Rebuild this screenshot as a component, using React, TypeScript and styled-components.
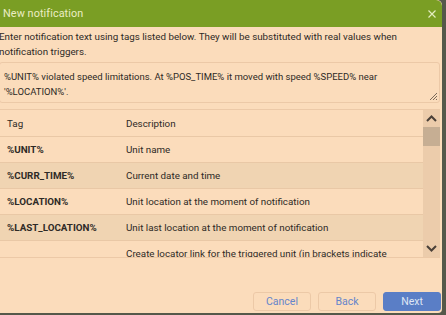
import React from "react";
import styled, { createGlobalStyle } from "styled-components";

const Global = createGlobalStyle`
  html, body { margin: 0; padding: 0; }
  body {
    background: #55584a;
    font-family: Roboto, "Liberation Sans", sans-serif;
    overflow: hidden;
    width: 446px;
    height: 315px;
  }
`;

const Dialog = styled.div`
  margin-left: -9px;
  width: 451px;
  height: 313px;
  box-sizing: border-box;
  background: #fbdcbb;
  border-radius: 0 5px 4px 4px;
  display: flex;
  flex-direction: column;
  overflow: hidden;
`;

const Header = styled.div`
  height: 27px;
  flex-shrink: 0;
  background: #7a9e24;
  display: flex;
  align-items: center;
  justify-content: space-between;
  padding: 0 6px 0 12px;
  border-radius: 0 6px 0 0;
`;

const Title = styled.div`
  color: #ecedc4;
  font-size: 10.8px;
  letter-spacing: 0.1px;
`;

const Close = styled.svg`
  display: block;
`;

const Body = styled.div`
  flex: 1;
  display: flex;
  flex-direction: column;
  padding: 0 1px 0 8px;
`;

const Intro = styled.div`
  font-size: 9.8px;
  line-height: 15px;
  color: #2e2a26;
  margin-top: 2px;
  padding-right: 1px;
`;

const TextBox = styled.div`
  margin-top: 3px;
  margin-right: 1px;
  height: 41px;
  box-sizing: border-box;
  border: 1px solid #ecc9a7;
  border-radius: 3px;
  padding: 6px 14px 0 4px;
  font-size: 9.5px;
  line-height: 15px;
  color: #2e2a26;
  position: relative;
`;

const Grip = styled.svg`
  position: absolute;
  right: 1px;
  bottom: 1px;
`;

const TableWrap = styled.div`
  margin-top: 6px;
  margin-right: 1px;
  height: 149px;
  border-top: 1px solid #ecc9a7;
  border-bottom: 1px solid #ecc9a7;
  display: flex;
  box-sizing: border-box;
  overflow: hidden;
`;

const Rows = styled.div`
  flex: 1;
  overflow: hidden;
`;

const Row = styled.div<{ $alt?: boolean; $head?: boolean }>`
  display: grid;
  grid-template-columns: 127px 1fr;
  height: ${(p) => (p.$head ? 26 : 25)}px;
  border-bottom: 1px solid #e9c8a6;
  background: ${(p) => (p.$alt ? "#f0d4b2" : "transparent")};
  align-items: center;
  font-size: 9.8px;
  color: #2e2a26;
`;

const TagCell = styled.div<{ $bold?: boolean }>`
  padding-left: 8px;
  font-weight: ${(p) => (p.$bold ? 700 : 400)};
`;

const DescCell = styled.div<{ $top?: boolean }>`
  align-self: ${(p) => (p.$top ? "start" : "center")};
  padding-top: ${(p) => (p.$top ? "5px" : "0")};
  line-height: 15px;
`;

const Scrollbar = styled.div`
  width: 17px;
  background: #ecccab;
  display: flex;
  flex-direction: column;
`;

const Arrow = styled.div`
  height: 17px;
  display: flex;
  align-items: center;
  justify-content: center;
`;

const Track = styled.div`
  flex: 1;
  display: flex;
  flex-direction: column;
`;

const Thumb = styled.div`
  height: 19px;
  background: #c6ae93;
`;

const Footer = styled.div`
  flex: 1;
  display: flex;
  justify-content: flex-end;
  align-items: flex-end;
  gap: 7px;
  padding-bottom: 2px;
`;

const Button = styled.button<{ $primary?: boolean }>`
  width: 58px;
  height: 19px;
  box-sizing: border-box;
  border-radius: 3px;
  border: 1px solid ${(p) => (p.$primary ? "#5a7ec6" : "#ecc9a7")};
  background: ${(p) => (p.$primary ? "#5a7ec6" : "transparent")};
  color: ${(p) => (p.$primary ? "#dfe6f4" : "#6585cb")};
  font-family: Roboto, "Liberation Sans", sans-serif;
  font-size: 10.5px;
  padding: 0;
  margin: 0;
`;

const rows = [
  { tag: "%UNIT%", desc: "Unit name" },
  { tag: "%CURR_TIME%", desc: "Current date and time" },
  { tag: "%LOCATION%", desc: "Unit location at the moment of notification" },
  { tag: "%LAST_LOCATION%", desc: "Unit last location at the moment of notification" },
  { tag: "", desc: "Create locator link for the triggered unit (in brackets indicate lifetime)" },
];

export default function App() {
  return (
    <>
      <Global />
      <Dialog>
        <Header>
          <Title>New notification</Title>
          <Close width="8" height="8" viewBox="0 0 8 8">
            <path d="M0.5 0.5 L7.5 7.5 M7.5 0.5 L0.5 7.5" stroke="#e3ecc0" strokeWidth="1.2" />
          </Close>
        </Header>
        <Body>
          <Intro>
            Enter notification text using tags listed below. They will be substituted with real values when notification triggers.
          </Intro>
          <TextBox>
            %UNIT% violated speed limitations. At %POS_TIME% it moved with speed %SPEED% near '%LOCATION%'.
            <Grip width="10" height="10" viewBox="0 0 10 10">
              <path d="M9 2 L2 9 M9 5 L5 9 M9 8 L8 9" stroke="#7a6a5a" strokeWidth="1" />
            </Grip>
          </TextBox>
          <TableWrap>
            <Rows>
              <Row $head>
                <TagCell>Tag</TagCell>
                <DescCell>Description</DescCell>
              </Row>
              {rows.map((r, i) => (
                <Row key={i} $alt={i % 2 === 1}>
                  <TagCell $bold>{r.tag}</TagCell>
                  <DescCell $top={i === 4}>{r.desc}</DescCell>
                </Row>
              ))}
            </Rows>
            <Scrollbar>
              <Arrow>
                <svg width="11" height="7" viewBox="0 0 11 7">
                  <path d="M1 6 L5.5 1.5 L10 6" stroke="#4a4038" strokeWidth="2" fill="none" />
                </svg>
              </Arrow>
              <Track>
                <Thumb />
              </Track>
              <Arrow>
                <svg width="11" height="7" viewBox="0 0 11 7">
                  <path d="M1 1 L5.5 5.5 L10 1" stroke="#4a4038" strokeWidth="2" fill="none" />
                </svg>
              </Arrow>
            </Scrollbar>
          </TableWrap>
          <Footer>
            <Button>Cancel</Button>
            <Button>Back</Button>
            <Button $primary>Next</Button>
          </Footer>
        </Body>
      </Dialog>
    </>
  );
}
